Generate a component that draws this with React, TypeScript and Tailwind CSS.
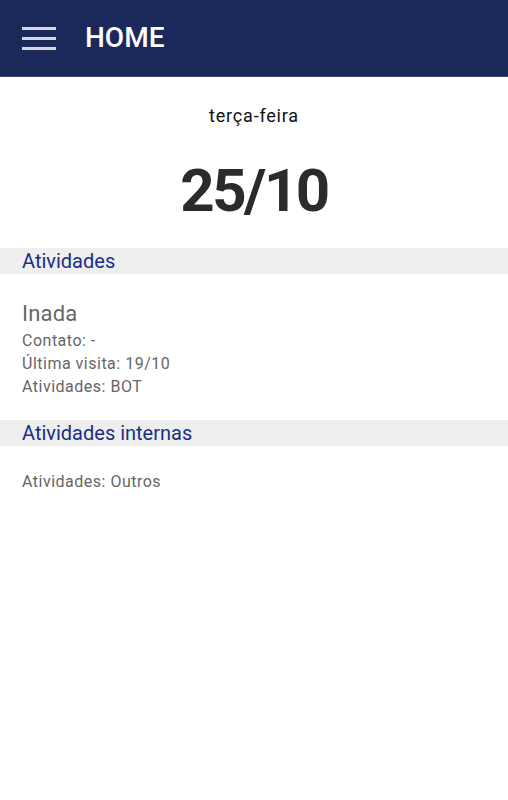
import React from "react";

export default function App() {
  return (
    <div className="w-[508px] h-[800px] bg-white" style={{ fontFamily: "Roboto, sans-serif" }}>
      <div className="h-[77px] bg-[#1b295a] border-b border-[#3a4a78] flex items-center">
        <div className="ml-[22px] w-[34px] flex flex-col gap-[7px]">
          <div className="h-[3px] bg-[#d5d8e2]" />
          <div className="h-[3px] bg-[#d5d8e2]" />
          <div className="h-[3px] bg-[#d5d8e2]" />
        </div>
        <div className="ml-[29px] text-white text-[28px] font-medium leading-none">HOME</div>
      </div>
      <div className="flex flex-col items-center">
        <div className="mt-[27px] text-[18px] leading-[24px] tracking-[0.8px] text-[#111]">terça-feira</div>
        <div className="mt-[31px] text-[60px] font-bold leading-[64px] tracking-[-2.5px] text-[#2b2b2b]">25/10</div>
      </div>
      <div className="mt-[25px] h-[26px] bg-[#eeeeee] flex items-center px-[22px] text-[20px] text-[#1a2f85]">Atividades</div>
      <div className="px-[22px] pt-[24px] text-[#666666]">
        <div className="text-[22px] leading-[31px] tracking-[0.2px]">Inada</div>
        <div className="text-[16px] leading-[23px] tracking-[0.5px]">Contato: -</div>
        <div className="text-[16px] leading-[23px] tracking-[0.5px]">Última visita: 19/10</div>
        <div className="text-[16px] leading-[23px] tracking-[0.5px]">Atividades: BOT</div>
      </div>
      <div className="mt-[22px] h-[26px] bg-[#eeeeee] flex items-center px-[22px] text-[20px] text-[#1a2f85]">Atividades internas</div>
      <div className="px-[22px] pt-[24px] text-[16px] leading-[23px] tracking-[0.5px] text-[#666666]">Atividades: Outros</div>
    </div>
  );
}
